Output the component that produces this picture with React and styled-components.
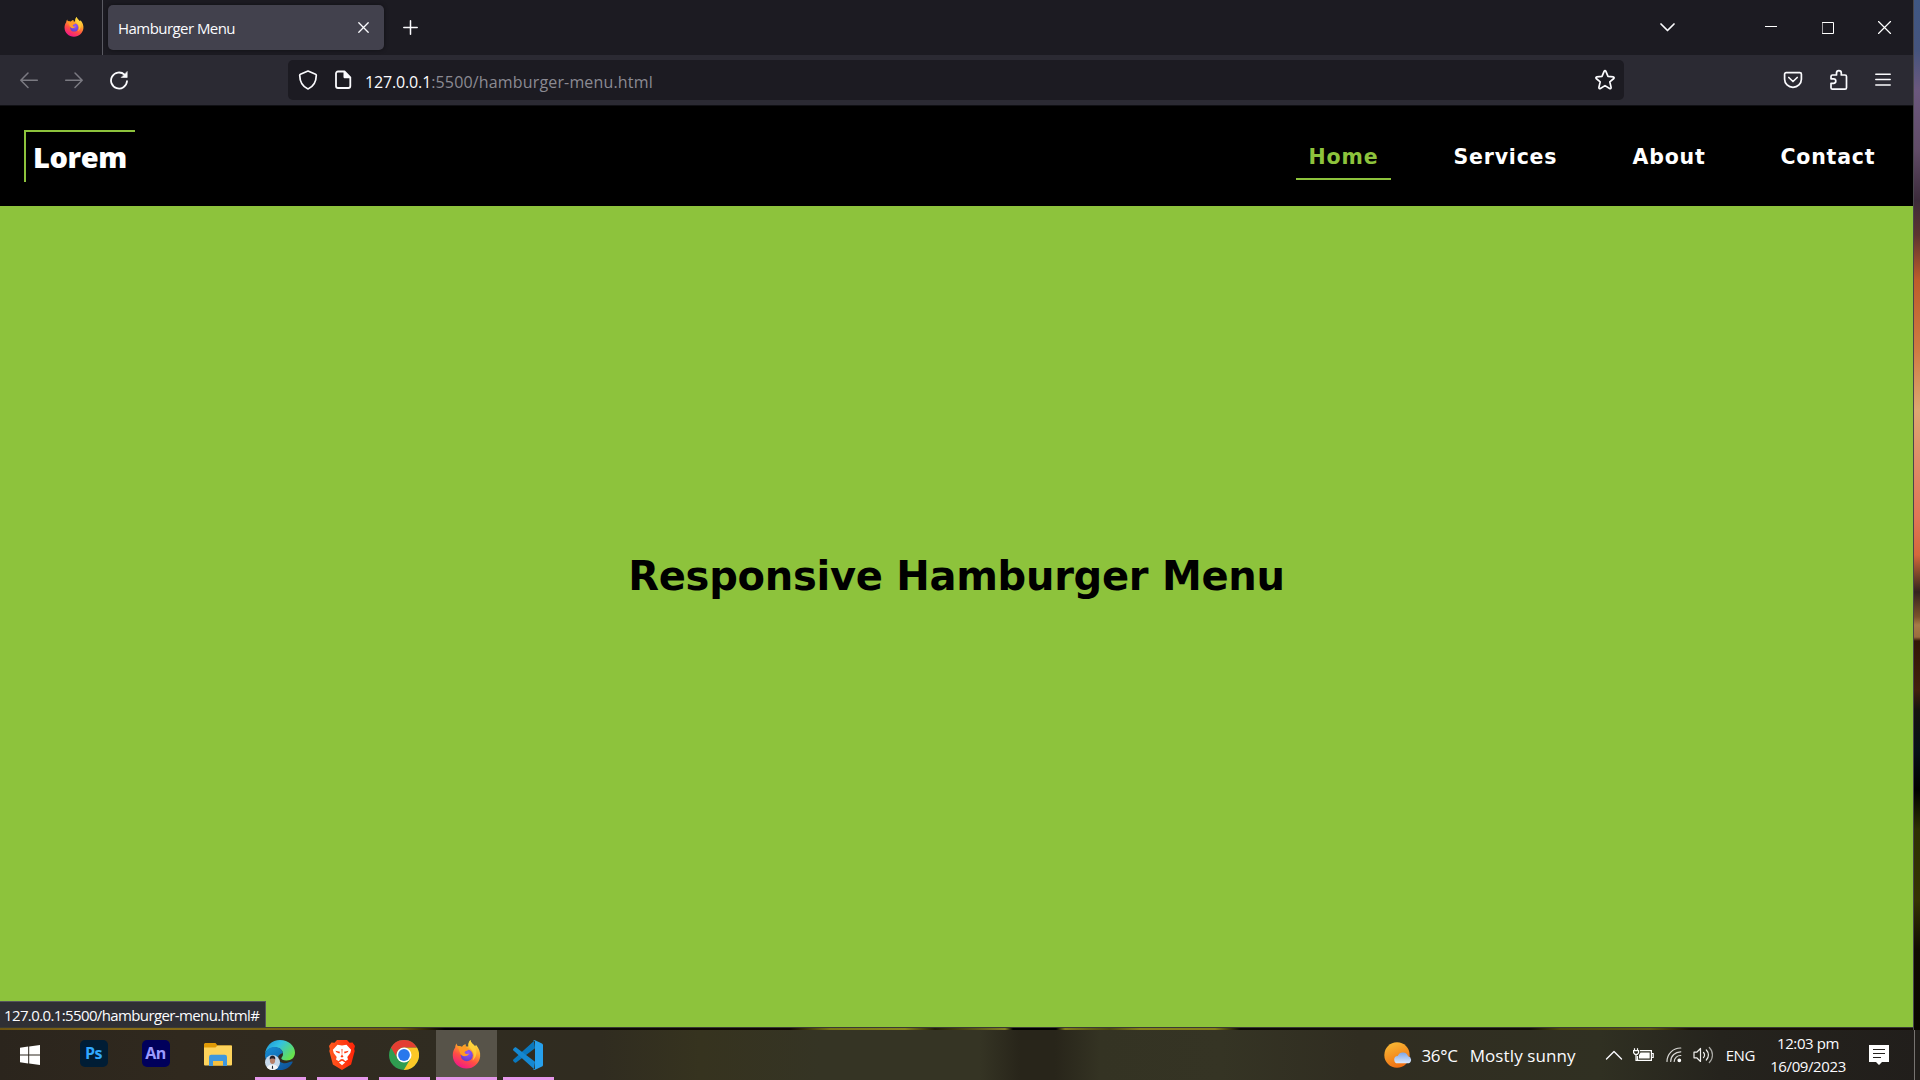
import React from "react";
import styled, { createGlobalStyle } from "styled-components";

const GREEN = "#8dc33c";
const UI_FONT = `"Open Sans", "Noto Sans", sans-serif`;

const GlobalStyle = createGlobalStyle`
  * { box-sizing: border-box; }
  body { margin: 0; background: #000; overflow: hidden; font-family: ${UI_FONT}; }
  svg { display: block; flex: none; }
`;

const Desktop = styled.div`
  width: 1920px;
  height: 1080px;
  display: flex;
  flex-direction: column;
  overflow: hidden;
`;
const Workspace = styled.div`
  height: 1030px;
  display: flex;
  background: linear-gradient(90deg, #6b5312 0, #8a6d18 120px, #6e5a10 400px, #000 445px, #0c0903 600px, #100602 790px, #787614 830px, #86841c 905px, #221d06 935px, #817f24 1005px, #000 1013px, #000 1056px, #807c1c 1065px, #4b4810 1110px, #85801a 1140px, #85801a 1215px, #0c0a04 1240px, #100d04 1530px, #4c480c 1560px, #5c5711 1650px, #181004 1690px, #120b04 1920px);
`;
const Browser = styled.div`
  width: 1913px;
  height: 1028px;
  display: flex;
  flex-direction: column;
  border-bottom: 1px solid #3a3a35;
`;
const Wallpaper = styled.div`
  width: 7px;
  height: 1030px;
  border-left: 1px solid #47464a;
  background: linear-gradient(180deg, #3f5783 0, #45547d 50px, #6b587e 90px, #614c67 150px, #3c2b3b 200px, #5c3430 235px, #bd5c2b 280px, #cf7a43 350px, #dda571 410px, #df8b69 460px, #e07456 520px, #d4663c 555px, #7b4529 575px, #33211e 592px, #7c522b 617px, #a87a47 625px, #9b6c3e 637px, #321606 641px, #42200e 690px, #15130f 710px, #061018 750px, #000 790px, #2e3003 830px, #353203 900px, #100b02 950px, #090501 1030px);
`;

const TabStrip = styled.div`
  height: 55px;
  display: flex;
  align-items: center;
  background: #1c1b22;
  color: #fbfbfe;
`;
const PinnedTab = styled.div`
  width: 103px;
  height: 55px;
  padding: 17px 0 0 64px;
  border-right: 1px solid #5a5a62;
`;
const Tab = styled.div`
  width: 276px;
  height: 45px;
  margin-left: 5px;
  padding: 0 15px 0 10px;
  display: flex;
  align-items: center;
  justify-content: space-between;
  border-radius: 5px;
  background: #42414d;
  box-shadow: 0 0 4px rgba(0, 0, 0, 0.45);
`;
const Label = styled.span`
  font-family: ${UI_FONT};
  font-size: ${(p) => p.$size || 15}px;
  line-height: ${(p) => p.$line || 20}px;
  letter-spacing: ${(p) => p.$track || 0}px;
  color: ${(p) => p.$color || "#fbfbfe"};
  white-space: pre;
`;
const IconSlot = styled.span`
  display: flex;
  flex: none;
  margin-left: ${(p) => p.$gap || 0}px;
  margin-top: ${(p) => p.$drop || 0}px;
`;
const Spacer = styled.div`
  flex: 1;
`;
const WindowControls = styled.div`
  display: flex;
  align-items: center;
  gap: 44px;
  padding-right: 21px;
`;

const Toolbar = styled.div`
  height: 51px;
  display: flex;
  align-items: center;
  padding-left: 19px;
  background: #2b2a33;
  border-bottom: 1px solid #101014;
`;
const History = styled.div`
  width: 269px;
  display: flex;
  gap: 25px;
`;
const AddressBar = styled.div`
  width: 1336px;
  height: 40px;
  display: flex;
  align-items: center;
  padding: 0 8px 0 10px;
  border-radius: 5px;
  background: #1c1b22;
`;
const Address = styled.div`
  margin: 3px 0 0 13px;
`;
const ToolbarActions = styled.div`
  flex: 1;
  display: flex;
  align-items: center;
  justify-content: flex-end;
  gap: 26px;
  padding-right: 22px;
`;

const SiteHeader = styled.header`
  height: 100px;
  display: flex;
  align-items: center;
  justify-content: space-between;
  padding: 0 24px;
  background: #000;
`;
const Logo = styled.div`
  width: 111px;
  height: 52px;
  padding: 5px 0 0 7px;
  border-top: 2px solid ${GREEN};
  border-left: 2px solid ${GREEN};
  font: 800 29px/40px ${UI_FONT};
  letter-spacing: -0.4px;
  color: #fff;
`;
const Nav = styled.nav`
  display: flex;
  gap: 50px;
  margin: 2px 2px 0 0;
`;
const NavLink = styled.a`
  width: ${(p) => p.$width}px;
  height: 46px;
  padding-left: 12.5px;
  border-bottom: 2px solid ${(p) => (p.$active ? GREEN : "transparent")};
  font: bold 20.5px/46px Verdana, "DejaVu Sans", sans-serif;
  letter-spacing: ${(p) => p.$track}px;
  color: ${(p) => (p.$active ? GREEN : "#fff")};
  white-space: nowrap;
`;
const Hero = styled.main`
  flex: 1;
  display: flex;
  flex-direction: column;
  justify-content: space-between;
  background: ${GREEN};
`;
const HeroTitle = styled.h1`
  margin: 340px 0 0;
  font: bold 40px/60px Verdana, "DejaVu Sans", sans-serif;
  letter-spacing: -0.27px;
  text-align: center;
  color: #000;
`;
const StatusPanel = styled.div`
  width: 266px;
  height: 26px;
  padding: 3px 0 0 4px;
  display: flex;
  border: solid #55555c;
  border-width: 1px 1px 0 0;
  background: #2f2f34;
`;

const Taskbar = styled.footer`
  height: 50px;
  display: flex;
  color: #fff;
  background: linear-gradient(90deg, #2b251d 0, #30291e 180px, #302c21 440px, #302c20 600px, #36331f 700px, #353424 820px, #353424 980px, #28251a 1020px, #28251a 1055px, #343323 1100px, #353424 1220px, #302d21 1360px, #303022 1600px, #25231d 1720px, #211e1b 1920px);
`;
const StartButton = styled.div`
  width: 63px;
  display: flex;
  padding: 15px 0 0 20px;
`;
const TaskSlot = styled.div`
  width: 62px;
  height: 50px;
  padding: 10px ${(p) => (p.$active ? 0 : 5)}px 0 ${(p) => (p.$active ? 1 : 6)}px;
  display: flex;
  flex-direction: column;
  align-items: center;
  justify-content: space-between;
  background: ${(p) => (p.$active ? "linear-gradient(90deg, transparent 1px, #575349 1px)" : "transparent")};

  > :first-child { margin-right: ${(p) => (p.$active ? 0 : 2)}px; }
`;
const Running = styled.div`
  width: 100%;
  height: 3px;
  background: ${(p) => (p.$on ? "#e598ea" : "transparent")};
`;
const AppTile = styled.div`
  width: 28px;
  height: 27px;
  border-radius: 5px;
  background: ${(p) => p.$bg};
  color: ${(p) => p.$fg};
  font: 700 16px/26px ${UI_FONT};
  letter-spacing: -0.5px;
  text-align: center;
`;
const Tray = styled.div`
  display: flex;
  align-items: center;
  height: 50px;
`;
const Clock = styled.div`
  width: 77px;
  height: 50px;
  margin-left: 15px;
  padding: 2px 1px 0 0;
  display: flex;
  flex-direction: column;
  align-items: center;
`;
const ShowDesktop = styled.div`
  width: 6px;
  height: 50px;
  margin-left: 25px;
  border-left: 1px solid #777471;
`;

const Stroke = ({ w, h, sw = 1.5, color = "#fbfbfe", children, ...rest }) => (
  <svg width={w} height={h} viewBox={`0 0 ${w} ${h}`} fill="none" stroke={color} strokeWidth={sw} strokeLinecap="round" strokeLinejoin="round" {...rest}>
    {children}
  </svg>
);

const Firefox = ({ size, id }) => (
  <svg width={size} height={size} viewBox="0 0 30 30">
    <defs>
      <linearGradient id={`${id}a`} x1="0.8" y1="0" x2="0.3" y2="1">
        <stop offset="0" stopColor="#fff44f" />
        <stop offset="0.35" stopColor="#ffa92b" />
        <stop offset="0.65" stopColor="#ff4f43" />
        <stop offset="1" stopColor="#f0148c" />
      </linearGradient>
      <radialGradient id={`${id}b`} cx="0.6" cy="0.3" r="0.8">
        <stop offset="0" stopColor="#9059ff" />
        <stop offset="1" stopColor="#5b3bc4" />
      </radialGradient>
    </defs>
    <path fill={`url(#${id}a)`} d="M19 0c.5 3 3 4.200 5 6.400l.8-1.600c3 3.600 4.800 7.600 4.300 12.200C28.400 24 22.500 29.500 15 29.500 7 29.500.8 23.500.8 15.700c0-3.500 1.200-6 2.500-8 .1-1.700.6-3 1.500-4 .1 1.400.8 2.300 1.700 3 1.300-.2 2.800.1 3.800.6 1.100-1.800 2.500-2.600 4-2.800-.5.900-.7 1.700-.5 2.400 1.700 0 2.400-.1 3-.4C16.700 4 17.500 1.500 19 0z" />
    <circle cx="15.300" cy="15.700" r="6.200" fill={`url(#${id}b)`} />
    <path fill="#ff9b25" d="M5 6.500c2.200-.5 4.500 0 6 1 .9-1.600 2-2.500 3.300-2.700-.3 1.700.1 3 1.800 3.700 1.400.4 1.500 1 .9 1.700-1.200 1.300-3.600 1-4 3 1 1.500 3.500 1.600 5 .8-1.200 2.600-5.700 3.700-8 1.700-2.800-2.400-1.700-5.500-5-9.200z" />
    <path fill="#ffd43b" opacity="0.8" d="M19 0c.5 3 3 4.200 4.500 6.700 3.500 5.500 1.500 12-2.500 14.500 2.600-4.500 1.600-9-1.500-12C16 6 16.800 2.500 19 0z" />
  </svg>
);

const Windows = () => (
  <svg width="20" height="20" viewBox="0 0 20 20" fill="#fff">
    <path d="M0 2.800 8.200 1.600v7.900H0zM9.200 1.500 20 0v9.500H9.200zM0 10.500h8.200v7.900L0 17.200zM9.200 10.500H20V20L9.200 18.500z" />
  </svg>
);

const Folder = () => (
  <svg width="28" height="30" viewBox="0 0 28 30">
    <path fill="#e09a06" d="M1 3h10.500l2 2.500H27V10H0V4z" />
    <path fill="#fdd35c" d="M0 7.500h11.500L13.500 5.500H28V24.500a1 1 0 0 1-1 1H1a1 1 0 0 1-1-1z" />
    <path fill="#3f97dd" d="M5 26V17a2.200 2.200 0 0 1 2.200-2.200h13.600A2.200 2.200 0 0 1 23 17v9h-4v-5H9v5z" />
    <path fill="#f7c140" d="M9 21h10v4.500H9z" />
  </svg>
);

const Edge = () => (
  <svg width="30" height="30" viewBox="0 0 30 30">
    <defs>
      <linearGradient id="edgeTop" x1="0" y1="0" x2="1" y2="0.6">
        <stop offset="0" stopColor="#1a8fd6" />
        <stop offset="0.45" stopColor="#33c1e2" />
        <stop offset="1" stopColor="#67e24c" />
      </linearGradient>
      <linearGradient id="edgeLow" x1="0" y1="0" x2="1" y2="1">
        <stop offset="0" stopColor="#1790d8" />
        <stop offset="1" stopColor="#0d4b91" />
      </linearGradient>
    </defs>
    <path fill="url(#edgeTop)" d="M0 14.500C.5 6 7 0 15 0c8.500 0 15 6 15 12.500 0 5-3.500 8-8.500 8-3.500 0-5.200-1.300-5.200-2.200 0-.9 1.700-1.600 1.700-4.300C18 9.500 14 7.500 10 7.500c-5 0-9 2.500-10 7z" />
    <path fill="url(#edgeLow)" d="M0 15C1 9.500 5 7 9.500 7c5 0 8 2.800 8.300 6C15.300 14 12.500 15.500 13 18.500c.6 3.400 5.500 6.300 11 3.800 1.500-.7 3.200-1.300 3.800-.6C26 26.500 21 30 15 30 7 30 0 23.500 0 15z" />
    <circle cx="7.500" cy="22.500" r="7.500" fill="#c6d8ea" />
    <path fill="#f3f4f7" d="M2 27.600c1-2.600 3-3.200 5.500-3.200s4.700.8 5.500 3.200C10 31 5 31 2 27.600z" />
    <path fill="#1f2937" d="M7.100 25.800h.8l.3 3H6.800z" />
    <ellipse cx="7.500" cy="20.500" rx="2.600" ry="3.400" fill="#b87f68" />
    <path fill="#242028" d="M4.700 19.500c-.3-3 1.200-4 2.800-4s3.100 1 2.800 4c-.8-1.500-4.800-1.500-5.600 0z" />
  </svg>
);

const Brave = () => (
  <svg width="26" height="30" viewBox="0 0 26 30">
    <defs>
      <linearGradient id="brave" x1="0" x2="1">
        <stop offset="0" stopColor="#ff5a1f" />
        <stop offset="1" stopColor="#ff2408" />
      </linearGradient>
    </defs>
    <path fill="url(#brave)" d="M8 0h10l2.500 2.800 3-.3L26 6l-.8 3 .5 2-3.600 13.500L13 30l-9.100-5.500L.3 11l.5-2L0 6l2.500-3.500 3 .3z" />
    <path fill="#fff" d="M13 5.500 17.500 4.700l4.600 5.100-.8 3.200-3 3.900.7 2.600-2.700 1.700-1.700-1.700-1.600-.6-1.600.6-1.700 1.700L7 19.500l.7-2.600-3-3.900-.8-3.200 4.600-5.100zM13 20.800l3.200 1.600L13 25.200l-3.200-2.800z" />
    <path fill="#ff3b12" d="M6.400 10.700 11 11.700l-.6 1.800-3-1.200zM19.600 10.700 15 11.700l.6 1.800 3-1.200zM12.500 9h1l-.3 5.700 1.300 2-1.500.9-1.500-.9 1.300-2z" />
  </svg>
);

const Chrome = () => (
  <svg width="30" height="30" viewBox="0 0 30 30">
    <circle cx="15" cy="15" r="15" fill="#2f9d50" />
    <path fill="#fcc827" d="M15 7.500H28A15 15 0 0 1 14.800 30L21.500 18.800z" />
    <path fill="#e33e32" d="M2 7.500A15 15 0 0 1 28 7.500H15A7.500 7.500 0 0 0 8.500 18.800z" />
    <circle cx="15" cy="15" r="7.500" fill="#fff" />
    <circle cx="15" cy="15" r="5.900" fill="#2878ec" />
  </svg>
);

const VSCode = () => (
  <svg width="30" height="30" viewBox="0 0 30 30">
    <path fill="#0a78be" d="M22 8.200 3.200 22.500c-.5.400-1 .3-1.500 0L.4 21.200c-.5-.5-.5-1.200 0-1.700L21 1z" />
    <path fill="#1588d1" d="M22 21.800 3.200 7.500c-.5-.4-1-.3-1.500 0L.4 8.800c-.5.500-.5 1.200 0 1.700L21 29z" />
    <path fill="#27a0ec" d="M21.500 0 29 3.400a1.800 1.800 0 0 1 1 1.600v20a1.800 1.800 0 0 1-1 1.600L21.500 30c-.7.100-1.300-.1-1.700-.6 1 .4 2.200-.2 2.200-1.500V2.100c0-1.300-1.200-1.900-2.200-1.500.4-.5 1-.7 1.700-.6z" />
  </svg>
);

const Weather = () => (
  <svg width="29" height="27" viewBox="0 0 29 27">
    <defs>
      <linearGradient id="sun" x1="0.3" y1="0" x2="0.7" y2="1">
        <stop offset="0" stopColor="#f8b834" />
        <stop offset="1" stopColor="#f06a10" />
      </linearGradient>
      <linearGradient id="cloud" x1="0" y1="0" x2="0" y2="1">
        <stop offset="0" stopColor="#7ea6e8" />
        <stop offset="1" stopColor="#dbe8fb" />
      </linearGradient>
    </defs>
    <circle cx="13" cy="13" r="12.700" fill="url(#sun)" />
    <path fill="url(#cloud)" d="M14 21.300a3.700 3.700 0 0 1-.2-7.400 5.500 5.500 0 0 1 10.300.3 3.700 3.700 0 0 1 .6 7.100z" />
  </svg>
);

const navItems = [
  { text: "Home", width: 95, track: 0.9, active: true },
  { text: "Services", width: 129, track: 0.8 },
  { text: "About", width: 98, track: 0.8 },
  { text: "Contact", width: 119, track: 0.8 },
];

const taskItems = [
  { id: "ps", icon: <AppTile $bg="#001d35" $fg="#31a8ff">Ps</AppTile> },
  { id: "an", icon: <AppTile $bg="#00005b" $fg="#9c9bff">An</AppTile> },
  { id: "files", icon: <Folder /> },
  { id: "edge", icon: <Edge />, on: true },
  { id: "brave", icon: <Brave />, on: true },
  { id: "chrome", icon: <Chrome />, on: true },
  { id: "firefox", icon: <Firefox size={29} id="ffTask" />, on: true, active: true },
  { id: "code", icon: <VSCode />, on: true },
];

export default function App() {
  return (
    <Desktop>
      <GlobalStyle />
      <Workspace>
        <Browser>
          <TabStrip>
            <PinnedTab>
              <Firefox size={20} id="ffTab" />
            </PinnedTab>
            <Tab>
              <Label $track={-0.55}>Hamburger Menu</Label>
              <Stroke w={11} h={11} sw={1.3}><path d="M.8.8l9.400 9.400M10.200.8L.8 10.200" /></Stroke>
            </Tab>
            <IconSlot $gap={19}>
              <Stroke w={15} h={15}><path d="M7.500.8v13.400M.8 7.500h13.400" /></Stroke>
            </IconSlot>
            <Spacer />
            <WindowControls>
              <IconSlot $drop={-1}>
                <Stroke w={15} h={9} sw={1.700}><path d="M1 1l6.500 6.500L14 1" /></Stroke>
              </IconSlot>
              <IconSlot $gap={46} $drop={-2}>
                <Stroke w={13} h={1} sw={1} color="#fff" strokeLinecap="butt"><path d="M0 .5h12" /></Stroke>
              </IconSlot>
              <Stroke w={12} h={12} sw={1} color="#fff" strokeLinejoin="miter"><path d="M.5.5h11v11H.5z" /></Stroke>
              <Stroke w={14} h={13} sw={1.200} color="#fff"><path d="M.5.5l12 12M12.500.5L.5 12.500" /></Stroke>
            </WindowControls>
          </TabStrip>

          <Toolbar>
            <History>
              <Stroke w={20} h={20} color="#7b7a82"><path d="M18.300 10.300H2M9 3L1.800 10.300 9 17.500" /></Stroke>
              <Stroke w={20} h={20} color="#7b7a82"><path d="M1.700 10.300H18M11 3l7.200 7.300L11 17.500" /></Stroke>
              <Stroke w={20} h={20} sw={1.800}>
                <path d="M18 11.200A8 8 0 1 1 15.500 4.700" />
                <path fill="#fbfbfe" strokeWidth="0.600" d="M18.200 1.800V7.500H12.500z" />
              </Stroke>
            </History>
            <AddressBar>
              <Stroke w={20} h={20} sw={1.700}>
                <path d="M10 1L2.400 4.200C1.900 4.400 1.700 4.800 1.700 5.300c.1 5.600 1.900 11 8.300 13.700 6.400-2.700 8.200-8.100 8.300-13.700 0-.5-.2-.9-.7-1.100z" />
              </Stroke>
              <IconSlot $gap={16}>
                <Stroke w={18} h={20} sw={1.800}>
                  <path d="M10.500 1.500H4a2 2 0 0 0-2 2V16a2 2 0 0 0 2 2h10.300a2 2 0 0 0 2-2V7.300zv5.800h5.800" />
                  <path fill="#fbfbfe" strokeWidth="0.500" d="M10.500 1.800l5.500 5.500h-5.500z" />
                </Stroke>
              </IconSlot>
              <Address>
                <Label $size={16} $track={-0.15}>127.0.0.1</Label>
                <Label $size={16} $track={0.16} $color="#8b8a92">:5500/hamburger-menu.html</Label>
              </Address>
              <Spacer />
              <Stroke w={22} h={22} sw={1.700}>
                <path d="M11 1.700c.4 0 .7.200.9.600l2.100 5 5.200.5c.9.100 1.200 1.100.6 1.700l-4 3.400 1.300 5.500c.2.900-.7 1.500-1.500 1.100L11 16.600l-4.600 2.900c-.8.400-1.700-.2-1.500-1.100l1.300-5.500-4-3.400c-.6-.6-.3-1.600.6-1.700l5.200-.5 2.100-5c.2-.4.500-.6.900-.6z" />
              </Stroke>
            </AddressBar>
            <ToolbarActions>
              <Stroke w={20} h={20} sw={1.700}>
                <path d="M3.200 2.700h13.600a1.600 1.600 0 0 1 1.600 1.600v5a8.400 8 0 0 1-16.800 0v-5a1.600 1.600 0 0 1 1.600-1.600z" />
                <path d="M5.800 7.500L10 11.500l4.200-4" />
              </Stroke>
              <Stroke w={20} h={22} sw={1.700}>
                <path d="M3.500 20.200a1.500 1.500 0 0 1-1.500-1.500v-4.300h2.500a2.200 2.200 0 0 0 0-4.600H2V7.500A1.500 1.500 0 0 1 3.500 6h4V4a2.400 2.400 0 0 1 4.800 0v2H16a1.500 1.500 0 0 1 1.500 1.500v11.200a1.500 1.500 0 0 1-1.500 1.500z" />
              </Stroke>
              <Stroke w={16} h={20} sw={1.500}><path d="M.8 4.200h14.400M.8 9.500h14.400M.8 15h14.400" /></Stroke>
            </ToolbarActions>
          </Toolbar>

          <SiteHeader>
            <Logo>Lorem</Logo>
            <Nav>
              {navItems.map((item) => (
                <NavLink key={item.text} $width={item.width} $track={item.track} $active={item.active}>
                  {item.text}
                </NavLink>
              ))}
            </Nav>
          </SiteHeader>
          <Hero>
            <HeroTitle>Responsive Hamburger Menu</HeroTitle>
            <StatusPanel>
              <Label $track={-0.62}>127.0.0.1:5500/hamburger-menu.html#</Label>
            </StatusPanel>
          </Hero>
        </Browser>
        <Wallpaper />
      </Workspace>

      <Taskbar>
        <StartButton>
          <Windows />
        </StartButton>
        {taskItems.map((item) => (
          <TaskSlot key={item.id} $active={item.active}>
            {item.icon}
            <Running $on={item.on} />
          </TaskSlot>
        ))}
        <Spacer />
        <Tray>
          <Weather />
          <IconSlot $gap={8} $drop={1}>
            <Label $size={17} $track={-0.3}>36°C</Label>
          </IconSlot>
          <IconSlot $gap={12} $drop={1}>
            <Label $size={17} $track={0.1}>Mostly sunny</Label>
          </IconSlot>
          <IconSlot $gap={29}>
            <Stroke w={18} h={10} sw={1.400}><path d="M1.500 9L9 1.500 16.500 9" /></Stroke>
          </IconSlot>
          <IconSlot $gap={10}>
            <svg width="21" height="14" viewBox="0 0 21 14" fill="none" stroke="#fff" strokeWidth="1.200">
              <path d="M7 2.600h11.400v9.800H4.500V8M19 5.500h1.200v4H19M1.500.2v2.500M4.500.2v2.500M.6 2.700h5v2L4.300 6.300H2L.6 4.700zM3 6.300V12.400h2" />
              <path fill="#fff" stroke="none" d="M7.500 4.500h9.200v6H6V7z" />
            </svg>
          </IconSlot>
          <IconSlot $gap={12}>
            <Stroke w={16} h={16} sw={1.200} color="#d9d8d5">
              <path d="M1 14.500A13.500 13.500 0 0 1 14.800 1M4.700 14.500A9.800 9.800 0 0 1 14.800 4.800M8.200 14.500A6.300 6.300 0 0 1 14.800 8.500" />
              <circle cx="13.300" cy="13.300" r="1.300" fill="#fff" stroke="#fff" />
            </Stroke>
          </IconSlot>
          <IconSlot $gap={11}>
            <Stroke w={21} h={18} sw={1.200} color="#f0efed">
              <path d="M1 6.200h2.700L7.500 2.500v13L3.700 11.800H1zM10.500 6.500a3.500 3.500 0 0 1 0 5M13.300 4a7 7 0 0 1 0 10" />
              <path opacity="0.650" d="M16.300 1.500a10.500 10.500 0 0 1 0 15" />
            </Stroke>
          </IconSlot>
          <IconSlot $gap={12}>
            <Label $track={-0.4}>ENG</Label>
          </IconSlot>
          <Clock>
            <Label $line={23} $track={-0.4}>12:03 pm</Label>
            <Label $line={23} $track={-0.4}>16/09/2023</Label>
          </Clock>
          <IconSlot $gap={22}>
            <svg width="20" height="20" viewBox="0 0 20 20">
              <path fill="#fff" d="M0 0h20v17h-7l-3 3-3-3H0z" />
              <path stroke="#25221e" strokeWidth="1.200" d="M4 4.500h12M4 8.500h12M4 12.500h8" />
            </svg>
          </IconSlot>
          <ShowDesktop />
        </Tray>
      </Taskbar>
    </Desktop>
  );
}
